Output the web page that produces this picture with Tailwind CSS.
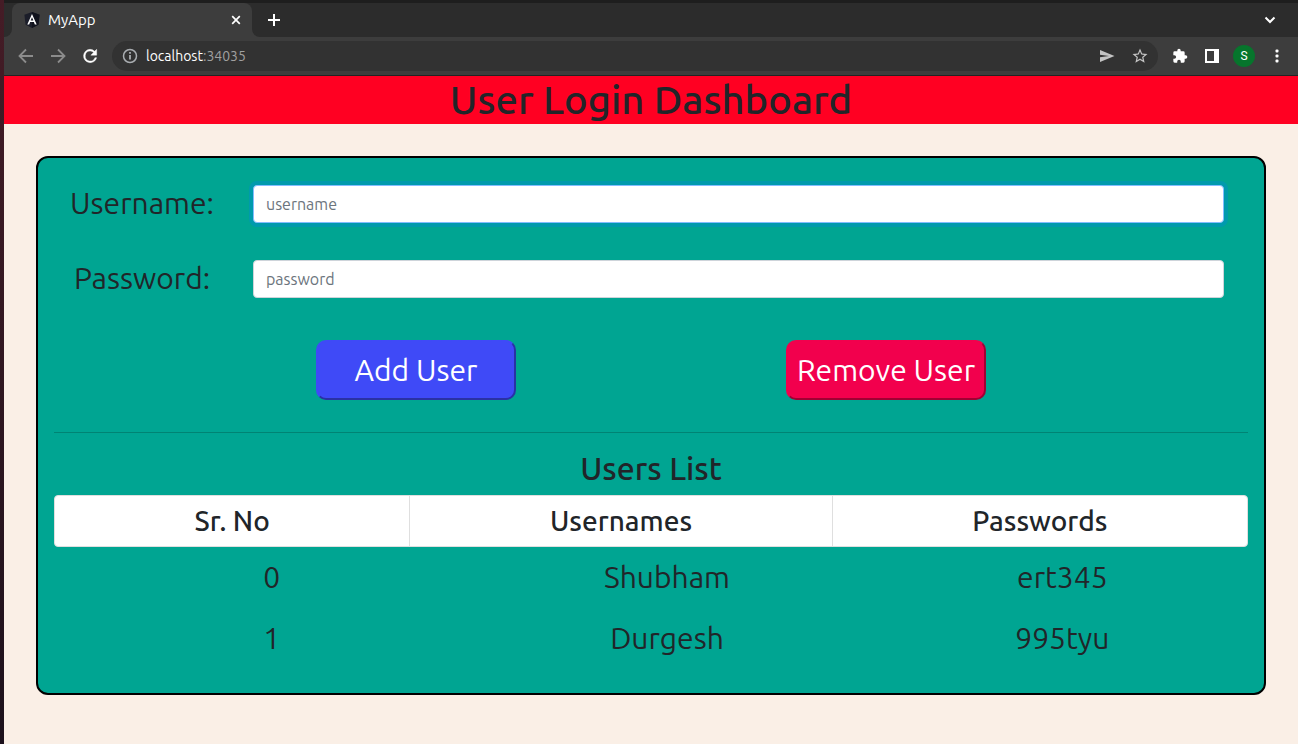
<!DOCTYPE html>
<html lang="en">
<head>
<meta charset="utf-8">
<meta name="viewport" content="width=device-width, initial-scale=1">
<title>MyApp</title>
<script src="https://cdn.jsdelivr.net/npm/@tailwindcss/browser@4"></script>
</head>
<body class="flex min-h-screen bg-gradient-to-b from-[#451c26] to-[#1c111c] font-['Ubuntu','Noto_Sans',sans-serif] text-[#212529]">
<div class="ml-1 flex min-w-0 flex-1 flex-col bg-[#faefe6]">
  <header class="border-t-3 border-b border-t-[#1e1e1e] border-b-[#232323] bg-[#3d3d3d] text-white">
    <div class="flex h-[34px] items-stretch bg-[#2c2c2c]">
      <div class="w-2 bg-[#3d3d3d]"><div class="h-full rounded-br-lg bg-[#2c2c2c]"></div></div>
      <div class="flex w-60 items-center rounded-t-lg bg-[#3d3d3d] pr-2 pl-3">
        <svg class="size-4" viewBox="0 0 16 16" aria-hidden="true"><path d="M8 0l7.6 2.7-1.2 10L8 16l-6.400-3.300L.4 2.700z" fill="#1b1d29"/><path d="M8 0v16l6.400-3.300 1.200-10z" fill="#10121c"/><path d="M8 1.900L3.300 12.400h1.900l.9-2.300h3.800l.9 2.300h1.900zM8 5.200l1.300 3.400H6.700z" fill="#fff"/></svg>
        <span class="ml-2 flex-1 text-[15px] leading-5">MyApp</span>
        <button class="flex size-4 items-center justify-center" aria-label="Close tab"><svg class="size-4" viewBox="0 0 16 16" fill="none" stroke="#fff" stroke-width="1.700"><path d="M4.200 4.200l7.600 7.600M11.800 4.200l-7.600 7.600"/></svg></button>
      </div>
      <div class="w-2 bg-[#3d3d3d]"><div class="h-full rounded-bl-lg bg-[#2c2c2c]"></div></div>
      <button class="ml-1 flex w-5 items-center justify-center" aria-label="New tab"><svg class="size-4" viewBox="0 0 16 16" fill="none" stroke="#fff" stroke-width="2"><path d="M8 2v12M2 8h12"/></svg></button>
      <button class="mr-5 ml-auto flex items-center" aria-label="Search tabs"><svg class="size-4" viewBox="0 0 16 16" fill="none" stroke="#fff" stroke-width="2"><path d="M3.500 5.500L8 10l4.500-4.500"/></svg></button>
    </div>
    <div class="flex h-[38px] items-center pr-[11px] pl-3">
      <button class="mr-3 flex size-5 items-center justify-center" aria-label="Back"><svg class="size-5" viewBox="0 0 20 20" fill="none" stroke="#8c8c8c" stroke-width="1.800"><path d="M17 10H4M10 3.500L3.500 10l6.500 6.500"/></svg></button>
      <button class="mr-3 flex size-5 items-center justify-center" aria-label="Forward"><svg class="size-5" viewBox="0 0 20 20" fill="none" stroke="#8c8c8c" stroke-width="1.800"><path d="M3 10h13M10 3.500l6.500 6.500-6.500 6.500"/></svg></button>
      <button class="mr-3 flex size-5 items-center justify-center" aria-label="Reload"><svg class="size-5" viewBox="0 0 24 24" fill="#fff" stroke="#fff" stroke-width=".5"><path d="M17.650 6.350A7.960 7.960 0 0012 4a8 8 0 108 10h-2.080A6 6 0 1112 6c1.660 0 3.140.69 4.220 1.780L13 11h7V4z"/></svg></button>
      <div class="flex h-[30px] flex-1 items-center rounded-full bg-[#323232] pr-2 pl-2">
        <svg class="size-5 shrink-0" viewBox="0 0 20 20" fill="none" stroke="#a9adb1" stroke-width="1.500" aria-hidden="true"><circle cx="10" cy="10" r="6.500"/><path d="M10 9v4.500M10 6v1.700" stroke-width="1.800"/></svg>
        <a href="#" class="ml-1.5 flex-1 text-sm leading-5 text-white">localhost<span class="text-[#a0a0a0]">:34035</span></a>
        <button class="mr-3.5 flex" aria-label="Share"><svg class="size-4.5" viewBox="0 0 18 18"><path d="M2 3l14.500 6L2 15v-4.700L11 9 2 7.700z" fill="#c4c4c4"/></svg></button>
        <button class="flex" aria-label="Bookmark"><svg class="size-[18px] mx-px" viewBox="0 0 24 24" fill="#c4c4c4"><path d="M22 9.240l-7.190-.62L12 2 9.190 8.630 2 9.240l5.460 4.730L5.820 21 12 17.270 18.180 21l-1.630-7.030zM12 15.400l-3.760 2.270 1-4.280-3.320-2.880 4.380-.38L12 6.100l1.710 4.040 4.380.38-3.320 2.880 1 4.280z"/></svg></button>
      </div>
      <button class="ml-3 flex size-5 items-center justify-center" aria-label="Extensions"><svg class="size-4" viewBox="0 0 24 24" fill="#fff"><path d="M20.500 11H19V7a2 2 0 00-2-2h-4V3.500a2.500 2.500 0 00-5 0V5H4a2 2 0 00-2 2v3.800h1.500a2.700 2.700 0 010 5.400H2V20a2 2 0 002 2h3.800v-1.500a2.700 2.700 0 015.400 0V22H17a2 2 0 002-2v-4h1.500a2.500 2.500 0 000-5z"/></svg></button>
      <button class="ml-3 flex size-5 items-center justify-center" aria-label="Side panel"><svg class="size-4" viewBox="0 0 16 16"><path d="M1 1h14v14H1zM3 3v10h7V3z" fill="#fff" fill-rule="evenodd"/></svg></button>
      <button class="ml-[11px] flex size-[22px] items-center justify-center rounded-full bg-[#06752c] font-['Roboto',sans-serif] text-xs" aria-label="Profile">S</button>
      <button class="ml-3 flex size-5 items-center justify-center" aria-label="Menu"><svg class="size-4" viewBox="0 0 16 16" fill="#fff"><rect x="6.500" y="1.500" width="3" height="3" rx="1"/><rect x="6.500" y="6.500" width="3" height="3" rx="1"/><rect x="6.500" y="11.500" width="3" height="3" rx="1"/></svg></button>
    </div>
  </header>

  <h1 class="bg-[#ff0022] text-center text-[40px] leading-[48px] font-medium">User Login Dashboard</h1>

  <main class="m-8 rounded-xl border-2 border-black bg-[#00a592] px-4 pt-[27px] pb-6">
    <form>
      <div class="flex items-center pr-6">
        <label for="username" class="w-[176px] pb-0.5 text-center text-3xl leading-9">Username:</label>
        <input id="username" type="text" placeholder="username" class="ml-[23px] h-[38px] min-w-0 flex-1 rounded-sm border border-[#80bdff] bg-white px-3 text-base shadow-[0_0_0_4px_rgba(0,123,255,0.25)] outline-none placeholder:text-[#6c757d]">
      </div>
      <div class="mt-[37px] flex items-center pr-6">
        <label for="password" class="w-[176px] pb-0.5 text-center text-3xl leading-9">Password:</label>
        <input id="password" type="password" placeholder="password" class="ml-[23px] h-[38px] min-w-0 flex-1 rounded-sm border border-[#ced4da] bg-white px-3 text-base outline-none placeholder:text-[#6c757d]">
      </div>
      <div class="-mx-2 mt-[42px] flex justify-evenly text-3xl leading-9 text-white">
        <button type="button" class="h-[60px] w-[200px] rounded-[10px] border-2 border-t-[#3f4af7] border-r-[#2a31a5] border-b-[#2a31a5] border-l-[#3f4af7] bg-[#3f4af7] whitespace-nowrap">Add User</button>
        <button type="button" class="flex h-[60px] w-[200px] items-center justify-center rounded-[10px] border-2 border-t-[#f2004d] border-r-[#a10033] border-b-[#a10033] border-l-[#f2004d] bg-[#f2004d] whitespace-nowrap">Remove User</button>
      </div>
    </form>
    <hr class="mt-8 border-black/20">
    <h2 class="mt-4 text-center text-[32px] leading-[38px] font-medium">Users List</h2>
    <table class="mt-2 block text-center">
      <thead class="block">
        <tr class="grid grid-cols-[356fr_423fr_415fr] divide-x divide-[#dfdfdf] rounded-sm border border-[#dfdfdf] bg-white text-[28px] leading-[34px]">
          <th class="py-2 font-medium">Sr. No</th>
          <th class="py-2 font-medium">Usernames</th>
          <th class="py-2 font-medium">Passwords</th>
        </tr>
      </thead>
      <tbody class="block pl-8 text-3xl leading-[45px]">
        <tr class="grid grid-cols-3 gap-6 py-2"><td>0</td><td>Shubham</td><td>ert345</td></tr>
        <tr class="grid grid-cols-3 gap-6 py-2"><td>1</td><td>Durgesh</td><td>995tyu</td></tr>
      </tbody>
    </table>
  </main>
</div>
</body>
</html>
